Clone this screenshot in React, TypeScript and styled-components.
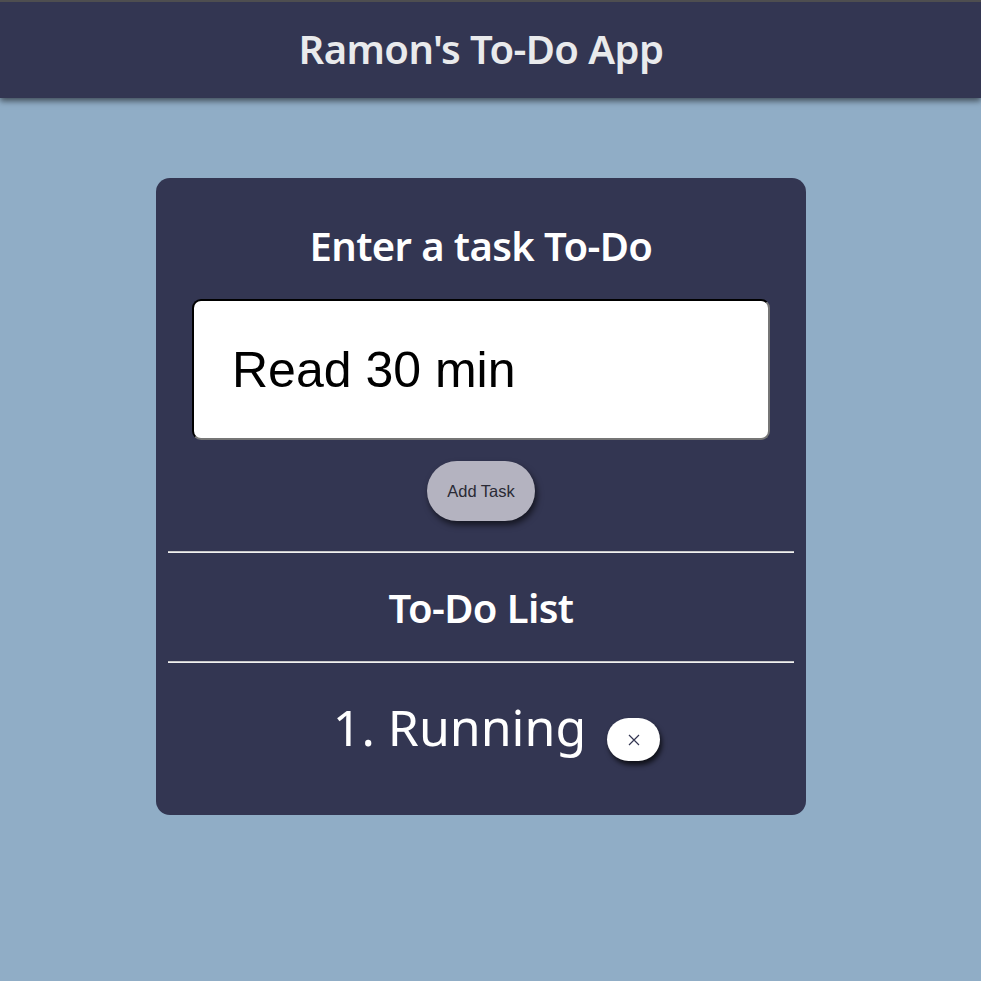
import React from "react";
import styled, { createGlobalStyle } from "styled-components";

const Global = createGlobalStyle`
  html, body { margin: 0; padding: 0; }
  body {
    background: #90adc6;
    font-family: "Noto Sans", "Open Sans", sans-serif;
    min-height: 981px;
  }
`;

const Header = styled.header`
  background: #333652;
  border-top: 2px solid #4e4e50;
  height: 96px;
  padding-right: 19px;
  display: flex;
  align-items: center;
  justify-content: center;
  box-shadow: 0 3px 6px rgba(0, 0, 0, 0.55);
`;

const AppTitle = styled.h1`
  margin: 0;
  color: #e9eaec;
  font-size: 40px;
  line-height: 54px;
  font-weight: 600;
  letter-spacing: -0.6px;
  padding-bottom: 2px;
`;

const Main = styled.main`
  display: flex;
  justify-content: center;
  padding: 80px 19px 0 0;
`;

const Card = styled.section`
  width: 650px;
  box-sizing: border-box;
  background: #333652;
  border-radius: 14px;
  padding: 0 12px 54px;
  display: flex;
  flex-direction: column;
  align-items: stretch;
`;

const Heading = styled.h2`
  margin: 0;
  color: #ffffff;
  font-size: 40px;
  line-height: 48px;
  font-weight: 600;
  text-align: center;
  letter-spacing: -0.6px;
`;

const FormArea = styled.div`
  padding: 44px 24px 0;
  display: flex;
  flex-direction: column;
  align-items: center;
`;

const TaskInput = styled.input`
  width: 100%;
  height: 141px;
  box-sizing: border-box;
  border-radius: 9px;
  border: 2px inset #767676;
  border-top-color: #1f1f1f;
  border-left-color: #1f1f1f;
  background: #fff;
  font-family: "Liberation Sans", Arial, sans-serif;
  font-size: 50px;
  padding: 0 0 0 38px;
  color: #000;
  margin-top: 29px;
  outline: none;
`;

const AddButton = styled.button`
  margin-top: 21px;
  width: 108px;
  height: 60px;
  border: none;
  border-radius: 30px;
  background: #b4b3c0;
  color: #2a2a35;
  font-family: "Liberation Sans", Arial, sans-serif;
  font-size: 16.5px;
  box-shadow: 2px 4px 6px rgba(0, 0, 0, 0.6);
`;

const Rule = styled.hr<{ $top: number }>`
  margin: ${(p) => p.$top}px 0 0;
  border: none;
  border-top: 1px solid #c8c8c8;
  border-bottom: 1px solid #f0f0f0;
  height: 0;
`;

const ListHeading = styled(Heading)`
  line-height: 110px;
  height: 108px;
`;

const List = styled.ol`
  list-style: none;
  margin: 30px 0 0;
  padding: 0;
  display: flex;
  flex-direction: column;
  align-items: center;
`;

const Item = styled.li`
  display: flex;
  align-items: flex-start;
  color: #ffffff;
  font-size: 50px;
  line-height: 68px;
  padding-left: 31px;
`;

const DeleteButton = styled.button`
  margin-left: 21px;
  margin-top: 25px;
  width: 53px;
  height: 43px;
  border: none;
  border-radius: 22px;
  background: #ffffff;
  display: flex;
  align-items: center;
  justify-content: center;
  padding: 0;
  box-shadow: 2px 4px 5px rgba(0, 0, 0, 0.7);
`;

export default function App() {
  return (
    <>
      <Global />
      <Header>
        <AppTitle>Ramon's To-Do App</AppTitle>
      </Header>
      <Main>
        <Card>
          <FormArea>
            <Heading>Enter a task To-Do</Heading>
            <TaskInput defaultValue="Read 30 min" />
            <AddButton>Add Task</AddButton>
          </FormArea>
          <Rule $top={30} />
          <ListHeading>To-Do List</ListHeading>
          <Rule $top={0} />
          <List>
            <Item>
              1. Running
              <DeleteButton aria-label="delete">
                <svg width="12" height="12" viewBox="0 0 12 12">
                  <path d="M1 1 L11 11 M11 1 L1 11" stroke="#333652" strokeWidth="1.2" />
                </svg>
              </DeleteButton>
            </Item>
          </List>
        </Card>
      </Main>
    </>
  );
}
